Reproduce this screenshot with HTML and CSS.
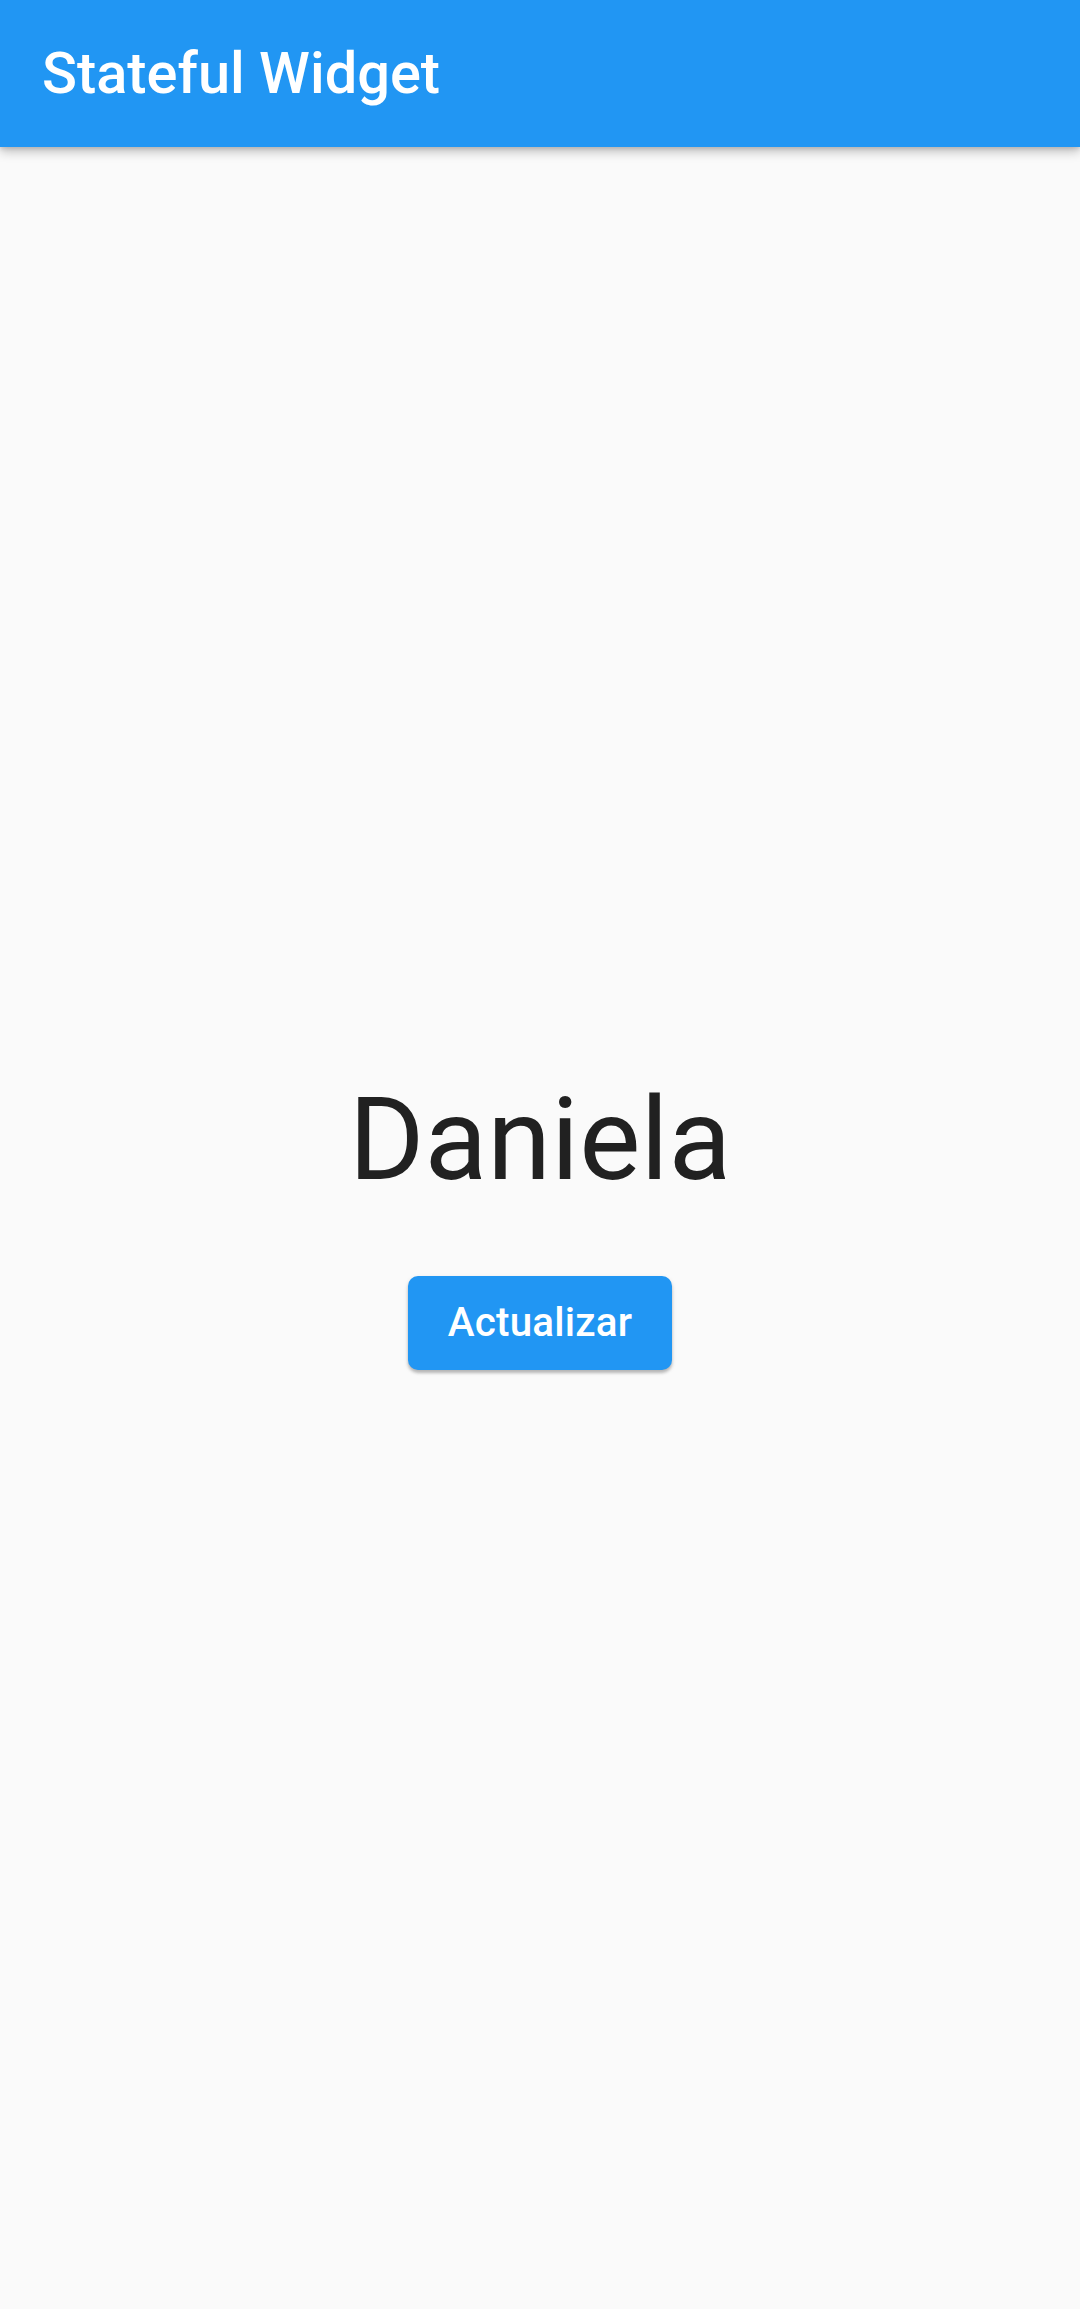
FILE: index.html
```html
<!DOCTYPE html>
<html lang="es">
<head>
<meta charset="utf-8">
<title>Stateful Widget</title>
<link rel="stylesheet" href="styles.css">
</head>
<body>
<header class="appbar">
  <h1 class="title">Stateful Widget</h1>
</header>
<main class="content">
  <div class="name">Daniela</div>
  <div class="btn-wrap">
    <button class="btn">Actualizar</button>
  </div>
</main>
</body>
</html>
```
FILE: styles.css
```css
html, body {
  margin: 0;
  padding: 0;
}
body {
  width: 1080px;
  height: 2309px;
  background: #fafafa;
  font-family: Roboto, "Noto Sans", sans-serif;
  overflow: hidden;
  display: flex;
  flex-direction: column;
}
.appbar {
  height: 147px;
  background: #2196f3;
  display: flex;
  align-items: center;
  padding: 0 42px;
  box-shadow: 0 5px 10px rgba(0,0,0,0.22), 0 2px 4px rgba(0,0,0,0.12);
  position: relative;
  z-index: 1;
  flex: none;
}
.title {
  margin: 0;
  color: #ffffff;
  font-size: 57.75px;
  font-weight: 500;
  letter-spacing: 0;
  line-height: 1;
}
.content {
  flex: 1;
  display: flex;
  flex-direction: column;
  align-items: center;
  justify-content: center;
}
.name {
  font-size: 115.5px;
  line-height: 137px;
  color: #212121;
  font-weight: 400;
}
.btn-wrap {
  margin-top: 52px;
  height: 126px;
  display: flex;
  align-items: center;
}
.btn {
  height: 94px;
  width: 264px;
  border: none;
  border-radius: 10px;
  background: #2196f3;
  color: #ffffff;
  font-family: Roboto, "Noto Sans", sans-serif;
  font-size: 40.4px;
  font-weight: 500;
  letter-spacing: 0.2px;
  padding: 0;
  box-shadow: 0 3px 3px rgba(0,0,0,0.2), 0 2px 5px rgba(0,0,0,0.12);
}
```
